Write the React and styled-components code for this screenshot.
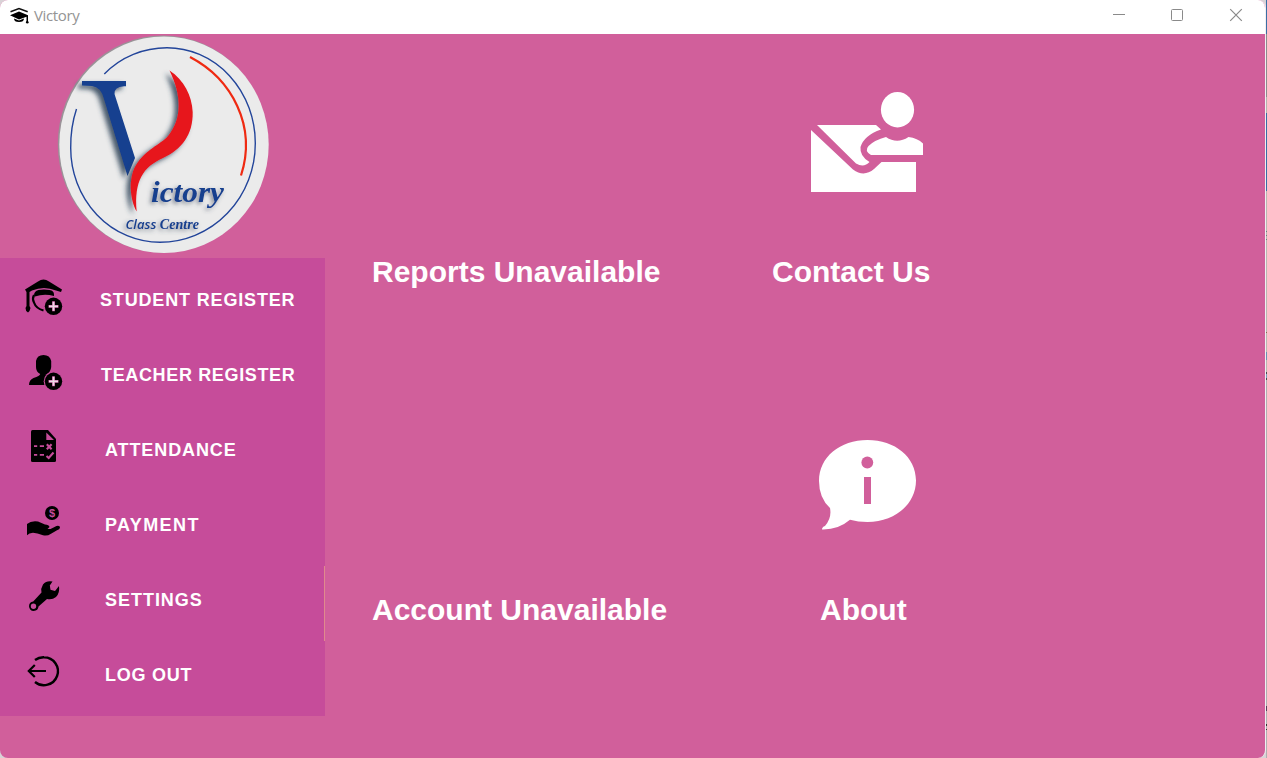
import React from 'react';
import styled, { createGlobalStyle } from 'styled-components';

const PINK = '#d15f9b';
const PURPLE = '#c64c9a';

const GlobalStyle = createGlobalStyle`
  * { box-sizing: border-box; }
  body { margin: 0; overflow: hidden; background: #d8d3d6; }
`;

const Desktop = styled.div`
  display: flex;
  width: 1267px;
  height: 758px;
  background: #d8d3d6;
`;

const Window = styled.div`
  display: flex;
  flex-direction: column;
  width: 1266px;
  height: 758px;
  border-right: 1px solid #f3eef1;
  border-radius: 8px;
  overflow: hidden;
  background: ${PINK};
`;

const DesktopEdge = styled.div`
  width: 1px;
  height: 758px;
  background: linear-gradient(
    #3a6ea5 0 34px, #8c8c8c 34px 97px, #b4b4ac 97px 113px, #3a6ea5 113px 191px,
    #b8b8b0 191px 231px, #6a7f80 231px 232px, #b8b8b0 232px 235px, #6a7f80 235px 236px,
    #b8b8b0 236px 239px, #6a7f80 239px 240px, #b8b8b0 240px 332px, #8a6a50 332px 333px,
    #b8b8b0 333px 352px, #6a92b4 352px 360px, #b8b8b0 360px 372px, #4a4a50 372px 374px,
    #7aa0c0 374px 378px, #4a4a50 378px 380px, #b0b0b0 380px 706px, #5a3f5c 706px 711px,
    #b0b0b0 711px 724px, #333 724px 726px, #b0b0b0 726px 729px, #333 729px 730px, #b0b0b0 730px
  );
`;

const TitleBar = styled.header`
  display: flex;
  align-items: center;
  flex: none;
  height: 34px;
  padding: 0 22px 4px 9px;
  background: #fff;
`;

const Title = styled.span`
  flex: 1;
  margin-left: 5px;
  font: 15px/20px 'Open Sans', 'Noto Sans', sans-serif;
  letter-spacing: -0.35px;
  color: #949494;
`;

const WindowControls = styled.div`
  display: flex;
  gap: 45px;
`;

const Body = styled.div`
  display: flex;
  flex: 1;
`;

const Sidebar = styled.aside`
  width: 325px;
`;

const LogoArea = styled.div`
  height: 224px;
  svg { display: block; }
`;

const Nav = styled.nav`
  padding-top: 8px;
  background: ${PURPLE};
`;

const NavItem = styled.a`
  display: flex;
  height: 75px;
  padding-left: 20px;
  border-right: 1px solid ${(p) => (p.$active ? '#e08a8c' : 'transparent')};
`;

const NavIcon = styled.svg`
  display: block;
  flex: none;
  width: 48px;
  height: 60px;
`;

const NavLabel = styled.span`
  margin: 24px 0 0 ${(p) => p.$offset}px;
  font: bold 18px/21px 'Liberation Sans', Arial, sans-serif;
  letter-spacing: ${(p) => p.$spacing}px;
  white-space: nowrap;
  color: #fff;
`;

const Main = styled.main`
  display: grid;
  flex: 1;
  grid-template-columns: 400px 1fr;
  grid-template-rows: 338px 338px;
  padding-left: 47px;
`;

const Card = styled.section`
  display: flex;
  flex-direction: column;
  justify-content: flex-end;
  padding: 0 0 82px ${(p) => p.$indent || 0}px;
`;

const CardIcon = styled.svg`
  display: block;
  flex: none;
  margin: 0 0 ${(p) => p.$gap}px ${(p) => p.$shift}px;
`;

const CardTitle = styled.h2`
  margin: 0;
  font: bold 30px/36px 'Liberation Sans', Arial, sans-serif;
  white-space: nowrap;
  color: #fff;
`;

const CapIcon = () => (
  <svg width="20" height="20" viewBox="9 5 20 20">
    <path d="M10.5 11.8 19 8.6l8.7 3.2" fill="none" stroke="#111" strokeWidth="1.6" />
    <path d="M10 15.3 19 11.5l9 3.8v7.400h-1.500v-6L19 19.400Z" fill="#000" />
    <path d="M14 18.500q0 3.500 5 3.500t5-3.500l-5 2Z" fill="#000" />
    <circle cx="27.300" cy="22.300" r="1.300" />
  </svg>
);

const Logo = () => (
  <svg width="325" height="224" viewBox="0 34 325 224">
    <defs>
      <filter id="soft" x="-30%" y="-30%" width="160%" height="160%">
        <feDropShadow dx="-4" dy="3" stdDeviation="2.5" floodColor="#2c3f55" floodOpacity=".85" />
      </filter>
      <filter id="softText" x="-20%" y="-40%" width="140%" height="180%">
        <feDropShadow dx="-2" dy="2" stdDeviation="2" floodColor="#3b4a5c" floodOpacity=".6" />
      </filter>
    </defs>
    <ellipse cx="162.8" cy="144" rx="105" ry="108.5" fill="#9a9398" />
    <ellipse cx="164" cy="144.7" rx="104.7" ry="108.3" fill="#ebebeb" />
    <path
      d="M104.300 74C121 56.500 144 47.700 167 47.700A88.300 95.500 0 0 1 255.300 143.200A95.300 99.100 0 0 1 160 242.300A89.300 94.300 0 0 1 70.700 148Q70.500 127 76.500 109"
      fill="none"
      stroke="#23459a"
      strokeWidth="1.4"
    />
    <path d="M190 57C232 79 257 126 241 175.500" fill="none" stroke="#ef2a12" strokeWidth="2.2" />
    <path
      filter="url(#soft)"
      fill="#143f8f"
      d="M82 81h44v5.300h-2Q114 87 114.500 94L135 158l-7.500 18L104 99Q101 87 92 86L82 85.500Z"
    />
    <path
      filter="url(#soft)"
      fill="#e7151a"
      d="M169.500 70.500C184 80 192 96 192.700 112C193 135 182 149 163 158C143 167 134 181 136.700 211.500C130 200 128 178 136 165C146 149 160 145 168 136C182 119 182 96 169.500 70.500Z"
    />
    <g fill="#193f8e" fontWeight="bold" fontStyle="italic" filter="url(#softText)">
      <text x="151" y="201.500" fontSize="30" textLength="73" lengthAdjust="spacingAndGlyphs" fontFamily="'Liberation Serif', serif">ictory</text>
      <text x="125.500" y="228.700" fontSize="14" textLength="73.500" lengthAdjust="spacingAndGlyphs" fontFamily="'Liberation Serif', serif">
        <tspan fontFamily="'Open Sans', sans-serif" fontWeight="600" fontSize="13">Class</tspan> Centre
      </text>
    </g>
  </svg>
);

const PlusBadge = ({ cy }) => (
  <g>
    <circle cx="53.500" cy={cy} r="9.800" fill={PURPLE} />
    <circle cx="53.500" cy={cy} r="8.700" />
    <path d={`M53.500 ${cy - 5}v10M48.500 ${cy}h10`} stroke={PURPLE} strokeWidth="2.800" />
    <path d={`M53.500 ${cy - 4.5}v9M49 ${cy}h9`} stroke="#eadbe5" strokeWidth="1.800" />
  </g>
);

const StudentIcon = () => (
  <NavIcon viewBox="20 266 48 60">
    <path d="M25 289.500 38 281.500q5.500-4 11 0l13 8-1 2.500-5-1.500q-12-5-24 0l-2.500 1.500v14l1 2-1 3-1.500 1.500-1.800-1.500-.7-3 1-2V292Z" />
    <path d="M34 295.500q0-4.500 4.500-5.500 5.500-1 11 0 4.500.5 4.500 4.500v1.500q-10-2.500-19 .5Z" />
    <path d="M34 295q-2 4 0 7.500 2 6 9.500 8" fill="none" stroke="#000" strokeWidth="2.200" />
    <PlusBadge cy={306.300} />
  </NavIcon>
);

const TeacherIcon = () => (
  <NavIcon viewBox="20 341 48 60">
    <path d="M36 361q1-6 7.500-6t7.700 6v6q-.5 5-4.200 7v4l5 4v3H29q0-5 4.500-7 6.500-2 6.700-4-4.200-2-4.200-7Z" />
    <PlusBadge cy={381.300} />
  </NavIcon>
);

const AttendanceIcon = () => (
  <NavIcon viewBox="20 416 48 60">
    <path d="M32.500 430H48l8 9v21.500q0 1.500-1.500 1.500h-22Q31 462 31 460.500v-29Q31 430 32.500 430Z" />
    <path d="M46.300 432.500v7.500h7.700ZM34 445.200h3.200v1.800H34ZM39.800 445.200h4.200v1.800h-4.200ZM34 454h3.200v1.800H34ZM39.800 454h4.200v1.800h-4.200Z" fill={PURPLE} />
    <path d="m46.800 444.300 4.800 5M51.600 444.300l-4.800 5M46.500 456l2.200 2 4.800-5.500" fill="none" stroke={PURPLE} strokeWidth="2.100" />
  </NavIcon>
);

const PaymentIcon = () => (
  <NavIcon viewBox="20 491 48 60">
    <path d="M27 524q4-3.500 11-2.500l7 3q4 0 4.500 2.500l-2 2 3 0 6-3q3.700-.7 3.500 1.700-.3 1.800-3 2.500l-6 3.500q-4 2.800-8 1.500-6-2.500-10-2.500-4 .2-6 2.500Z" />
    <circle cx="52" cy="513" r="7" />
    <text x="52" y="517" textAnchor="middle" fontFamily="'Liberation Sans', sans-serif" fontWeight="bold" fontSize="11" fill={PURPLE}>$</text>
  </NavIcon>
);

const SettingsIcon = () => (
  <NavIcon viewBox="20 566 48 60">
    <path fillRule="evenodd" d="M52.500 581.500q-6-1.300-9.500 3-2.500 4-1.500 8l-8.300 9q-4.200.5-4.200 4.800.5 4.700 4.700 4.700 4.500-.5 4.800-4.500l8.500-7.500q5 1.300 9-2 4-4 3-11l-4 5-4.500-1.300-.7-4.200ZM33.500 603.500a2.700 2.700 0 1 1 0 5.400 2.700 2.700 0 1 1 0-5.400Z" />
  </NavIcon>
);

const LogoutIcon = () => (
  <NavIcon viewBox="20 641 48 60">
    <path d="M35 660Q39 657 44 657.200A14 14 0 1 1 35 682" fill="none" stroke="#000" strokeWidth="2.400" />
    <path d="M28.500 671H46M34.800 665l-6 6 6 6" fill="none" stroke="#000" strokeWidth="2.200" />
  </NavIcon>
);

const ContactIcon = () => (
  <CardIcon $gap={62} $shift={39} width="112" height="100" viewBox="811 92 112 100">
    <g fill="#fff">
      <ellipse cx="897.500" cy="109.700" rx="16.600" ry="17.700" />
      <path d="M817 125h59l5 4.500q-17 6-20.500 17.500-1 9 9 15-5.500 6-13.500 1.500Z" />
      <path d="M811 130 853 169.500q11 8 21-.5l7.500-7H916v30H811Z" />
      <path d="M886 137q11 7.500 22.500 0 9 1 14.500 6.500V155H871q-7-4-2.500-9 6-6 17.500-9Z" />
    </g>
  </CardIcon>
);

const AboutIcon = () => (
  <CardIcon $gap={62} $shift={-1} width="97" height="90" viewBox="819 440 97 90">
    <path fill="#fff" d="M867.500 440C895 440 916 457 916 480.500S895 522 867.500 522Q858 522 850 519.800 838 530 822 529.500 822 527 825 526 832 518 830 508 819 498 819 481C819 457 840 440 867.500 440Z" />
    <circle cx="867.300" cy="462.500" r="5.900" fill={PINK} />
    <path d="M864 477h7v27h-7Z" fill={PINK} />
  </CardIcon>
);

const navItems = [
  { label: 'STUDENT REGISTER', Icon: StudentIcon, offset: 32, spacing: 0.84 },
  { label: 'TEACHER REGISTER', Icon: TeacherIcon, offset: 33, spacing: 0.65 },
  { label: 'ATTENDANCE', Icon: AttendanceIcon, offset: 37, spacing: 0.9 },
  { label: 'PAYMENT', Icon: PaymentIcon, offset: 37, spacing: 1.4 },
  { label: 'SETTINGS', Icon: SettingsIcon, offset: 37, spacing: 0.97, active: true },
  { label: 'LOG OUT', Icon: LogoutIcon, offset: 37, spacing: 0.75 },
];

export default function App() {
  return (
    <Desktop>
      <GlobalStyle />
      <Window>
        <TitleBar>
          <CapIcon />
          <Title>Victory</Title>
          <WindowControls>
            <svg width="14" height="14" viewBox="0 0 14 14"><path d="M2 6.500h12" stroke="#8a8a8a" /></svg>
            <svg width="14" height="14" viewBox="0 0 14 14"><rect x="1.500" y="1.500" width="11" height="11" rx="1" fill="none" stroke="#8a8a8a" /></svg>
            <svg width="14" height="14" viewBox="0 0 14 14"><path d="m1.200 1.200 11.600 11.600M12.800 1.200 1.200 12.800" stroke="#8a8a8a" strokeWidth="1.200" /></svg>
          </WindowControls>
        </TitleBar>
        <Body>
          <Sidebar>
            <LogoArea><Logo /></LogoArea>
            <Nav>
              {navItems.map(({ label, Icon, offset, spacing, active }) => (
                <NavItem key={label} $active={active}>
                  <Icon />
                  <NavLabel $offset={offset} $spacing={spacing}>{label}</NavLabel>
                </NavItem>
              ))}
            </Nav>
          </Sidebar>
          <Main>
            <Card><CardTitle>Reports Unavailable</CardTitle></Card>
            <Card>
              <ContactIcon />
              <CardTitle>Contact Us</CardTitle>
            </Card>
            <Card><CardTitle>Account Unavailable</CardTitle></Card>
            <Card $indent={48}>
              <AboutIcon />
              <CardTitle>About</CardTitle>
            </Card>
          </Main>
        </Body>
      </Window>
      <DesktopEdge />
    </Desktop>
  );
}
